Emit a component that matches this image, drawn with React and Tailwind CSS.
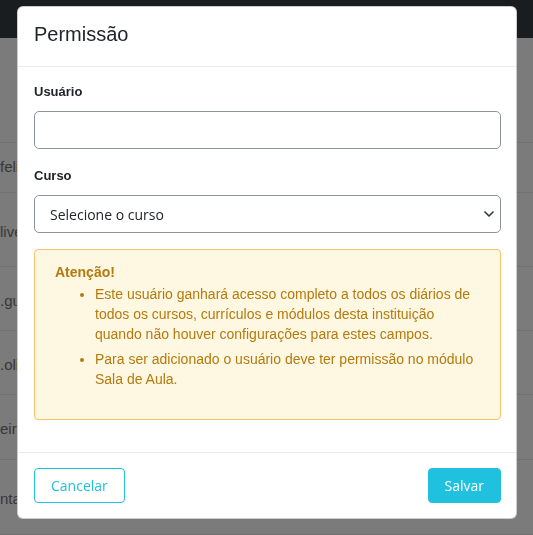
import { ChevronDown } from "lucide-react";

const rows = [
  { h: "h-[50px]", name: "felipe.rocha" },
  { h: "h-[69px]", name: "liveira.m" },
  { h: "h-[59px]", name: ".gustavo" },
  { h: "h-[59px]", name: ".oliveira" },
  { h: "h-[60px]", name: "eira.ana" },
  { h: "h-[70px]", name: "ntaro.s" },
];

export default function App() {
  return (
    <div className="min-h-[535px] bg-[#f6f6f6] font-['Liberation_Sans',Arial,sans-serif]">
      {/* page behind the modal */}
      <div className="h-[38px] bg-[#343a40]" />
      <div className="pt-[104px]">
        <div className="border-t border-[#e2e2e2]">
          {rows.map((r, i) => (
            <div
              key={i}
              className={`${r.h} mb-[5px] flex items-center border-b border-[#e2e2e2] text-[15px] text-[#707070]`}
            >
              {r.name}
            </div>
          ))}
        </div>
      </div>

      {/* Modal */}
      <div className="fixed inset-0 bg-black/50 flex justify-center items-start pt-[6px] pl-[1px]">
        <div className="w-[500px] bg-white rounded-[6px] border border-black/20">
          <div className="pl-4 pr-[15px] pt-[12px] pb-[17px] border-b border-[#e9ecef]">
            <h5 className="text-[20px] leading-[30px] text-[#212529]">Permissão</h5>
          </div>

          <div className="pl-4 pr-[15px] pt-[14px] pb-4">
            <div className="mb-4">
              <label className="block text-[13px] leading-[21px] font-bold text-[#212529] mb-[9px]">Usuário</label>
              <input
                type="text"
                className="block w-full h-[38px] border border-[#8d9399] rounded-[5px] px-3 font-['Open_Sans',sans-serif] text-[14px] outline-none"
              />
            </div>

            <div className="mb-4">
              <label className="block text-[13px] leading-[21px] font-bold text-[#212529] mb-[9px]">Curso</label>
              <div className="relative">
                <select className="block w-full h-[38px] appearance-none border border-[#8d9399] rounded-[5px] pl-[15px] pr-8 bg-white font-['Open_Sans',sans-serif] text-[14px] text-[#212529] outline-none">
                  <option>Selecione o curso</option>
                </select>
                <ChevronDown
                  size={16}
                  strokeWidth={2.5}
                  className="absolute right-[4px] top-[11px] text-[#343a40] pointer-events-none"
                />
              </div>
            </div>

            <div className="mb-4 border border-[#f5c46c] bg-[#fef7e2] rounded-[4px] px-5 pt-3 pb-[14px] text-[14px] leading-[20px] text-[#b47a0e]">
              <div className="font-bold">Atenção!</div>
              <ul className="list-disc pl-10 mt-[2px] mb-4">
                <li className="mb-[5px]">
                  Este usuário ganhará acesso completo a todos os diários de todos os cursos, currículos e módulos desta
                  instituição quando não houver configurações para estes campos.
                </li>
                <li>Para ser adicionado o usuário deve ter permissão no módulo Sala de Aula.</li>
              </ul>
            </div>
          </div>

          <div className="flex justify-between items-center pl-4 pr-[15px] pt-[15px] pb-[15px] border-t border-[#e9ecef] font-['Open_Sans',sans-serif]">
            <button className="h-[35px] px-4 border border-[#20c1de] text-[#20c1de] rounded-[4px] text-[14px] bg-white">
              Cancelar
            </button>
            <button className="h-[35px] px-4 border border-[#20c1de] bg-[#20c1de] text-white rounded-[4px] text-[14px]">
              Salvar
            </button>
          </div>
        </div>
      </div>
    </div>
  );
}
